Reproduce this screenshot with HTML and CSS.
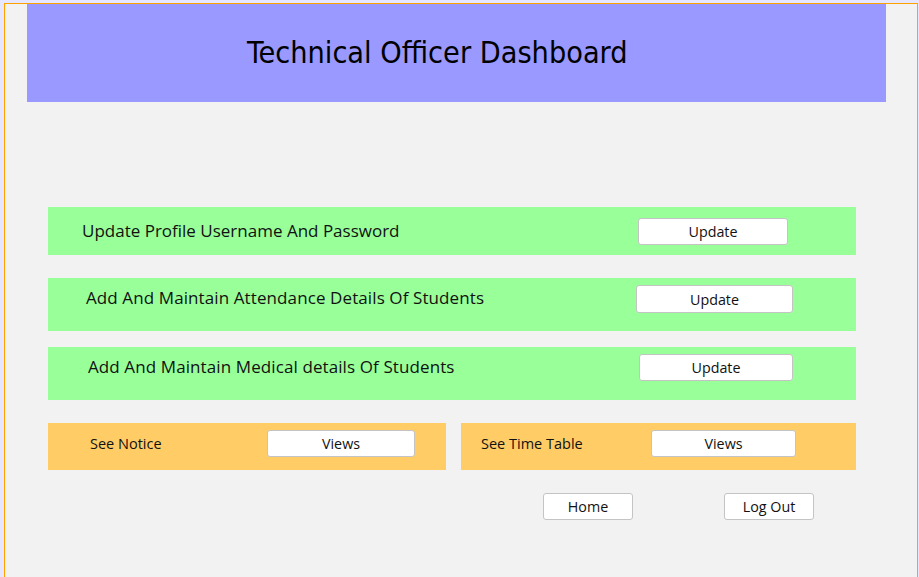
FILE: index.html
```html
<!DOCTYPE html>
<html>
<head>
<meta charset="utf-8">
<title>Technical Officer Dashboard</title>
<link rel="stylesheet" href="styles.css">
</head>
<body>
<div class="frame">
  <header class="header"><h1 class="title">Technical Officer Dashboard</h1></header>

  <div class="row row-green row-1">
    <span class="label">Update Profile Username And Password</span>
    <button class="btn btn-update">Update</button>
  </div>

  <div class="row row-green row-2">
    <span class="label">Add And Maintain Attendance Details Of Students</span>
    <button class="btn btn-update">Update</button>
  </div>

  <div class="row row-green row-3">
    <span class="label">Add And Maintain Medical details Of Students</span>
    <button class="btn btn-update">Update</button>
  </div>

  <div class="split">
    <div class="row row-orange row-notice">
      <span class="label small">See Notice</span>
      <button class="btn btn-views">Views</button>
    </div>
    <div class="row row-orange row-timetable">
      <span class="label small">See Time Table</span>
      <button class="btn btn-views">Views</button>
    </div>
  </div>

  <div class="footer">
    <button class="btn btn-nav btn-home">Home</button>
    <button class="btn btn-nav btn-logout">Log Out</button>
  </div>
</div>
</body>
</html>
```

FILE: styles.css
```css
html, body {
  margin: 0;
  padding: 0;
  height: 100%;
}
body {
  background: #e6e6ff;
  overflow: hidden;
  font-family: "Open Sans", "Noto Sans", sans-serif;
  color: #111;
}
.frame {
  box-sizing: border-box;
  margin: 3px 0 0 4px;
  width: 914px;
  height: 574px;
  border: 1px solid #ffa200;
  border-bottom: none;
  background: #f2f2f2;
}
.header {
  margin-left: 22px;
  width: 859px;
  height: 98px;
  background: #9999ff;
  display: flex;
  align-items: center;
}
.title {
  margin: 0 0 0 220px;
  font-family: "DejaVu Sans Condensed", "DejaVu Sans", sans-serif;
  font-weight: normal;
  font-size: 30.3px;
  color: #000;
  line-height: 1;
}
.row {
  box-sizing: border-box;
  display: flex;
  align-items: flex-start;
}
.row-green {
  margin-left: 43px;
  width: 808px;
  background: #99ff99;
}
.row-1 { margin-top: 105px; height: 48px; }
.row-2 { margin-top: 23px; height: 53px; }
.row-3 { margin-top: 16px; height: 53px; }
.label {
  font-size: 17px;
  letter-spacing: 0.1px;
  line-height: 22px;
  white-space: nowrap;
}
.row-1 .label { margin: 13px 0 0 34px; width: 556px; letter-spacing: 0; }
.row-1 .btn { margin-top: 11px; width: 150px; height: 27px; }
.row-2 .label { margin: 9px 0 0 38px; width: 550px; }
.row-2 .btn { margin-top: 7px; width: 157px; height: 28px; }
.row-3 .label { margin: 9px 0 0 40px; width: 551px; }
.row-3 .btn { margin-top: 7px; width: 154px; height: 27px; }

.split {
  margin: 23px 0 0 43px;
  display: flex;
  gap: 15px;
}
.row-orange {
  background: #ffcc66;
  height: 47px;
}
.label.small {
  font-size: 14.5px;
  letter-spacing: 0;
  line-height: 20px;
}
.row-notice { width: 398px; }
.row-notice .label { margin: 11px 0 0 42px; width: 177px; }
.row-notice .btn { margin-top: 7px; width: 148px; height: 27px; }
.row-timetable { width: 395px; }
.row-timetable .label { margin: 11px 0 0 20px; width: 170px; }
.row-timetable .btn { margin-top: 7px; width: 145px; height: 27px; }

.btn {
  box-sizing: border-box;
  padding: 2px 0 0;
  background: #fff;
  border: 1px solid #c4c4c4;
  border-radius: 3px;
  font-family: "Open Sans", "Noto Sans", sans-serif;
  font-size: 14.3px;
  color: #111;
  line-height: 1;
}
.footer {
  margin: 23px 0 0 538px;
  display: flex;
  gap: 91px;
}
.btn-nav {
  width: 90px;
  height: 27px;
}
```
